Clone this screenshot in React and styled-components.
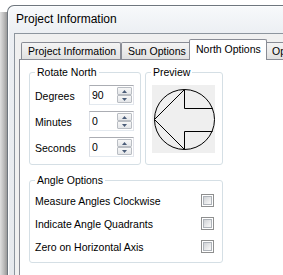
import React from "react";
import styled, { createGlobalStyle } from "styled-components";

const Global = createGlobalStyle`
  html, body { margin: 0; padding: 0; background: #fff; }
  body { font-family: "Liberation Sans", Arial, sans-serif; color: #000; }
`;

const Screen = styled.div`
  width: 283px;
  height: 275px;
  overflow: hidden;
  display: flex;
  background: #fff;
`;

const BackShadow = styled.div`
  flex: none;
  width: 7px;
  margin-top: 12px;
  background: linear-gradient(to right, #e0e0e0, #bcbcbc 55%, #9a9a9a);
`;

const Window = styled.div`
  flex: 1;
  min-width: 0;
  margin-top: 5px;
  display: flex;
  flex-direction: column;
  border-top: 1px solid #6e767e;
  border-left: 1px solid #6e767e;
  border-top-left-radius: 7px;
  background: linear-gradient(to bottom, #f7f9fb 0, #eceff3 27px, #e6e9ed 100%);
  box-shadow: inset 1px 1px 0 #fcfdfe;
`;

const TitleBar = styled.div`
  height: 27px;
  line-height: 27px;
  padding-left: 8px;
  font-size: 12px;
  white-space: nowrap;
`;

const Client = styled.div`
  flex: 1;
  min-width: 0;
  margin-left: 6px;
  display: flex;
  flex-direction: column;
  border-top: 1px solid #8d959e;
  border-left: 1px solid #8d959e;
  background: #f0f0f0;
  padding: 5px 0 0 4px;
`;

const TabStrip = styled.div`
  display: flex;
  align-items: flex-end;
  height: 21px;
  margin-bottom: -1px;
  padding-left: 2px;
  white-space: nowrap;
`;

const Tab = styled.div`
  flex: none;
  box-sizing: border-box;
  width: ${(p) => (p.$w ? `${p.$w}px` : "auto")};
  height: ${(p) => (p.$active ? 21 : 17)}px;
  margin: 0 ${(p) => (p.$active ? -2 : 0)}px ${(p) => (p.$active ? 0 : 1)}px;
  position: relative;
  z-index: ${(p) => (p.$active ? 2 : 1)};
  border: 1px solid #898c95;
  border-bottom: none;
  border-radius: 2px 2px 0 0;
  background: ${(p) =>
    p.$active ? "#fff" : "linear-gradient(#f4f4f4, #ebebeb 50%, #e0e0e0)"};
  padding: ${(p) => (p.$active ? 3 : 2)}px 6px 0;
  font-size: 10.5px;
  line-height: 12px;
  text-align: ${(p) => (p.$w ? "center" : "left")};
`;

const Panel = styled.div`
  flex: 1;
  background: #fff;
  border-top: 1px solid #898c95;
  border-left: 1px solid #898c95;
  padding: 6px 0 0 9px;
`;

const Layout = styled.div`
  display: grid;
  grid-template-columns: 112px 78px;
  column-gap: 4px;
  row-gap: 9px;
`;

const Group = styled.fieldset`
  margin: 0;
  min-width: 0;
  box-sizing: border-box;
  border: 1px solid #d5dfe5;
  border-radius: 3px;
  padding: ${(p) => p.$pad};
  grid-column: ${(p) => (p.$span ? "1 / -1" : "auto")};
`;

const Legend = styled.legend`
  margin-left: ${(p) => p.$ml || 0}px;
  padding: 0 2px;
  font-size: 10.5px;
  line-height: 12px;
`;

const SpinRow = styled.div`
  display: flex;
  align-items: flex-start;
  height: 20px;
  & + & {
    margin-top: 6px;
  }
`;

const FieldLabel = styled.span`
  width: 54px;
  flex: none;
  padding-top: 5px;
  font-size: 10.5px;
  line-height: 12px;
`;

const SpinBox = styled.div`
  box-sizing: border-box;
  width: 45px;
  height: 20px;
  display: flex;
  justify-content: space-between;
  border: 1px solid;
  border-color: #abadb3 #e2e3ea #e3e9ef #dbdfe6;
  background: #fff;
  padding: 1px;
`;

const SpinValue = styled.span`
  padding: 2px 0 0 1px;
  font-size: 10.5px;
  line-height: 12px;
`;

const SpinButtons = styled.div`
  display: flex;
  flex-direction: column;
  width: 15px;
`;

const SpinButton = styled.span`
  flex: 1;
  box-sizing: border-box;
  display: flex;
  align-items: center;
  justify-content: center;
  border: 1px solid #b9bdc3;
  border-radius: 1px;
  background: linear-gradient(#f7f7f7, #e4e6e9);
`;

const PreviewCanvas = styled.div`
  width: 63px;
  height: 68px;
  background: #efefef;
`;

const OptionRow = styled.div`
  display: flex;
  align-items: center;
  justify-content: space-between;
  height: 23px;
  font-size: 10.5px;
  line-height: 12px;
`;

const Check = styled.span`
  box-sizing: border-box;
  width: 13px;
  height: 13px;
  display: flex;
  border: 1px solid #8e8f8f;
  background: #fff;
  padding: 1px;
`;

const CheckFill = styled.span`
  flex: 1;
  border: 1px solid #aeb3b9;
  background: linear-gradient(135deg, #cfd2d6, #f3f3f3 80%);
`;

const Arrow = ({ up }) => (
  <svg width="5" height="3" viewBox="0 0 5 3">
    <path d={up ? "M0 3 L2.5 0 L5 3 Z" : "M0 0 L5 0 L2.5 3 Z"} fill="#4a5c78" />
  </svg>
);

const Spinner = ({ value }) => (
  <SpinBox>
    <SpinValue>{value}</SpinValue>
    <SpinButtons>
      <SpinButton>
        <Arrow up />
      </SpinButton>
      <SpinButton>
        <Arrow />
      </SpinButton>
    </SpinButtons>
  </SpinBox>
);

const NorthArrow = () => (
  <svg width="63" height="68" viewBox="0 0 63 68">
    <circle cx="32.5" cy="34.5" r="30" fill="none" stroke="#000" strokeWidth="1" />
    <polyline
      points="2.5,34.5 32.5,4.5 32.5,23.5 60.5,23.5"
      fill="none"
      stroke="#000"
      strokeWidth="1"
    />
    <polyline
      points="60.5,46.5 32.5,46.5 32.5,64.5 2.5,34.5"
      fill="none"
      stroke="#000"
      strokeWidth="1"
    />
  </svg>
);

const spins = [
  ["Degrees", "90"],
  ["Minutes", "0"],
  ["Seconds", "0"],
];

const options = [
  "Measure Angles Clockwise",
  "Indicate Angle Quadrants",
  "Zero on Horizontal Axis",
];

export default function App() {
  return (
    <>
      <Global />
      <Screen>
        <BackShadow />
        <Window>
          <TitleBar>Project Information</TitleBar>
          <Client>
            <TabStrip>
              <Tab $w={100}>Project Information</Tab>
              <Tab $w={70}>Sun Options</Tab>
              <Tab $w={78} $active>
                North Options
              </Tab>
              <Tab>Options</Tab>
            </TabStrip>
            <Panel>
              <Layout>
                <Group $pad="7px 5px 7px 5px">
                  <Legend>Rotate North</Legend>
                  {spins.map(([label, value]) => (
                    <SpinRow key={label}>
                      <FieldLabel>{label}</FieldLabel>
                      <Spinner value={value} />
                    </SpinRow>
                  ))}
                </Group>
                <Group $pad="7px 6px 6px 6px">
                  <Legend $ml={-1}>Preview</Legend>
                  <PreviewCanvas>
                    <NorthArrow />
                  </PreviewCanvas>
                </Group>
                <Group $span $pad="3px 8px 4px 5px">
                  <Legend>Angle Options</Legend>
                  {options.map((o) => (
                    <OptionRow key={o}>
                      <span>{o}</span>
                      <Check>
                        <CheckFill />
                      </Check>
                    </OptionRow>
                  ))}
                </Group>
              </Layout>
            </Panel>
          </Client>
        </Window>
      </Screen>
    </>
  );
}
